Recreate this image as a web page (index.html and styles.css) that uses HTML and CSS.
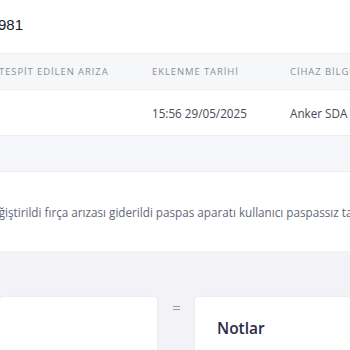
FILE: index.html
```html
<!DOCTYPE html>
<html lang="tr">
<head>
<meta charset="utf-8">
<link rel="stylesheet" href="styles.css">
</head>
<body>
<div class="page">
  <div class="title-bar"><h1 class="title">981</h1></div>
  <div class="table">
    <div class="thead">
      <div class="th">Tespit edilen arıza</div>
      <div class="th">Eklenme tarihi</div>
      <div class="th">Cihaz bilgisi</div>
    </div>
    <div class="trow">
      <div class="td"></div>
      <div class="td">15:56 29/05/2025</div>
      <div class="td">Anker SDA 1234</div>
    </div>
    <div class="subrow"></div>
    <div class="desc">değiştirildi fırça arızası giderildi paspas aparatı kullanıcı paspassız tamamlandı</div>
  </div>
  <div class="lower">
    <div class="card card-left"></div>
    <div class="handle"><span class="line"></span><span class="line"></span></div>
    <div class="card card-right"><h2 class="card-title">Notlar</h2></div>
  </div>
</div>
</body>
</html>
```
FILE: styles.css
```css
html, body {
  margin: 0;
  padding: 0;
  background: #ffffff;
  overflow: hidden;
}
.page {
  width: 350px;
  height: 350px;
  overflow: hidden;
  font-family: "Open Sans", "Liberation Sans", sans-serif;
}
.title-bar {
  height: 53px;
  box-sizing: border-box;
  padding-top: 15px;
  overflow: hidden;
}
.title {
  margin: 0 0 0 -2px;
  font-family: "Liberation Sans", Arial, sans-serif;
  font-weight: 400;
  font-size: 15px;
  line-height: 20px;
  color: #1a1d29;
  white-space: nowrap;
}
.thead, .trow {
  display: grid;
  grid-template-columns: 153px 138px 220px;
  margin-left: -1px;
  align-items: center;
  white-space: nowrap;
}
.thead {
  height: 37px;
  box-sizing: border-box;
  background: #f6f7f9;
  border-top: 1px solid #eceef2;
  border-bottom: 1px solid #eceef2;
}
.th {
  font-size: 9.5px;
  letter-spacing: 0.9px;
  text-transform: uppercase;
  color: #8a8f99;
}
.trow {
  height: 46px;
  box-sizing: border-box;
  border-bottom: 1px solid #eceef2;
}
.td {
  font-size: 11.7px;
  color: #464a55;
}
.subrow {
  height: 36px;
  box-sizing: border-box;
  background: #f5f7fa;
  border-bottom: 1px solid #eceef2;
}
.desc {
  height: 79px;
  display: flex;
  align-items: center;
  margin-left: -15px;
  white-space: nowrap;
  font-size: 11.7px;
  color: #636778;
}
.lower {
  background: #f2f2f7;
  height: 100px;
  padding-top: 46px;
  display: flex;
}
.card {
  background: #ffffff;
  border-radius: 4px;
  box-shadow: 0 0 3px rgba(40, 40, 80, 0.06);
}
.card-left {
  width: 157px;
  flex: none;
}
.handle {
  width: 38px;
  flex: none;
  display: flex;
  flex-direction: column;
  align-items: center;
  gap: 2px;
  padding-top: 9px;
  box-sizing: border-box;
}
.line {
  display: block;
  width: 7px;
  height: 1px;
  background: #9a9ca8;
}
.card-right {
  flex: 1;
  padding: 20px 0 0 22px;
}
.card-title {
  margin: 0;
  font-size: 15.5px;
  font-weight: 600;
  line-height: 22px;
  color: #2b2a45;
}
```
